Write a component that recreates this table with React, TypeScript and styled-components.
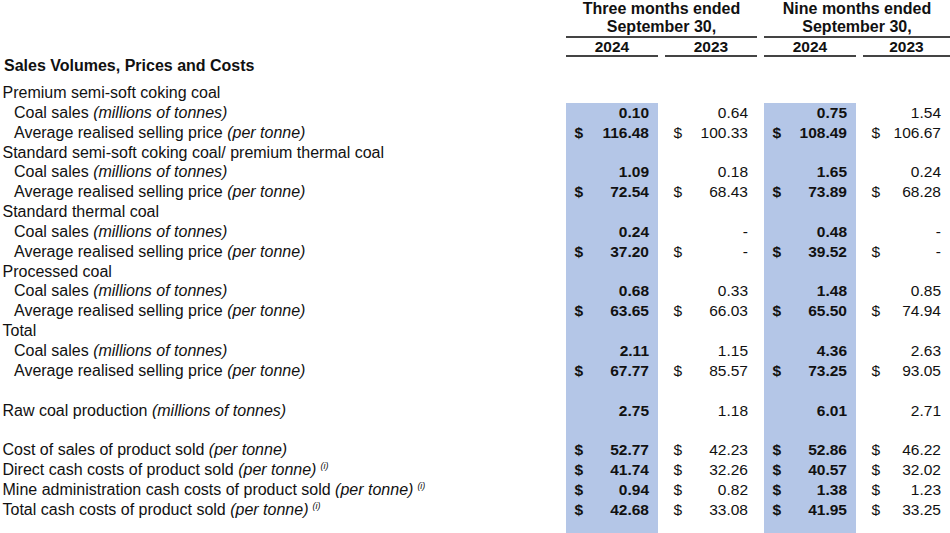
import React from "react";
import styled, { createGlobalStyle } from "styled-components";

const GlobalStyle = createGlobalStyle`
  html, body { margin: 0; padding: 0; background: #ffffff; }
  body {
    font-family: "Liberation Sans", Arial, sans-serif;
    font-size: 15.5px;
    color: #111111;
  }
`;

const Page = styled.div`
  width: 950px;
  min-height: 100vh;
  display: flex;
  flex-direction: column;
  overflow: hidden;
`;

const Grid = styled.div`
  display: grid;
  grid-template-columns: 559px 92px 92px 92px 1fr;
  column-gap: 7px;
`;

const GroupRow = styled(Grid)`
  font-weight: bold;
  font-size: 16px;
  line-height: 18px;
`;

const GroupTitle = styled.div<{ $span: string }>`
  grid-column: ${(p) => p.$span};
  text-align: center;
  border-bottom: 2px solid #444444;
`;

const YearRow = styled(Grid)`
  font-weight: bold;
  line-height: 17px;
`;

const Year = styled.div`
  text-align: center;
  border-bottom: 2px solid #444444;
`;

const Heading = styled.div`
  font-weight: bold;
  font-size: 16px;
  line-height: 18px;
  padding-left: 4px;
  margin-bottom: 8px;
`;

const DataRow = styled(Grid)`
  line-height: 19.85px;
  white-space: nowrap;
`;

const Filler = styled(Grid)`
  flex: 1;
`;

const Label = styled.div<{ $indent: boolean }>`
  padding-left: ${(p) => (p.$indent ? "14px" : "2.5px")};
  font-size: 16px;
`;

const Unit = styled.span`
  font-style: italic;
`;

const Note = styled.sup`
  font-size: 9px;
  font-style: italic;
  line-height: 0;
  vertical-align: 6px;
  margin-left: 4px;
`;

const Value = styled.div<{ $strong: boolean; $shade: boolean }>`
  display: flex;
  justify-content: space-between;
  padding: 0 9px 0 8.5px;
  font-weight: ${(p) => (p.$strong ? "bold" : "normal")};
  background: ${(p) => (p.$shade ? "#b4c6e7" : "transparent")};
`;

type Row =
  | { kind: "section"; label: string }
  | { kind: "blank" }
  | {
      kind: "item";
      label: string;
      unit: string;
      indent: boolean;
      dollar?: boolean;
      note?: boolean;
      values: string[];
    };

const rows: Row[] = [
  { kind: "section", label: "Premium semi-soft coking coal" },
  { kind: "item", label: "Coal sales", unit: "(millions of tonnes)", indent: true, values: ["0.10", "0.64", "0.75", "1.54"] },
  { kind: "item", label: "Average realised selling price", unit: "(per tonne)", indent: true, dollar: true, values: ["116.48", "100.33", "108.49", "106.67"] },
  { kind: "section", label: "Standard semi-soft coking coal/ premium thermal coal" },
  { kind: "item", label: "Coal sales", unit: "(millions of tonnes)", indent: true, values: ["1.09", "0.18", "1.65", "0.24"] },
  { kind: "item", label: "Average realised selling price", unit: "(per tonne)", indent: true, dollar: true, values: ["72.54", "68.43", "73.89", "68.28"] },
  { kind: "section", label: "Standard thermal coal" },
  { kind: "item", label: "Coal sales", unit: "(millions of tonnes)", indent: true, values: ["0.24", "-", "0.48", "-"] },
  { kind: "item", label: "Average realised selling price", unit: "(per tonne)", indent: true, dollar: true, values: ["37.20", "-", "39.52", "-"] },
  { kind: "section", label: "Processed coal" },
  { kind: "item", label: "Coal sales", unit: "(millions of tonnes)", indent: true, values: ["0.68", "0.33", "1.48", "0.85"] },
  { kind: "item", label: "Average realised selling price", unit: "(per tonne)", indent: true, dollar: true, values: ["63.65", "66.03", "65.50", "74.94"] },
  { kind: "section", label: "Total" },
  { kind: "item", label: "Coal sales", unit: "(millions of tonnes)", indent: true, values: ["2.11", "1.15", "4.36", "2.63"] },
  { kind: "item", label: "Average realised selling price", unit: "(per tonne)", indent: true, dollar: true, values: ["67.77", "85.57", "73.25", "93.05"] },
  { kind: "blank" },
  { kind: "item", label: "Raw coal production", unit: "(millions of tonnes)", indent: false, values: ["2.75", "1.18", "6.01", "2.71"] },
  { kind: "blank" },
  { kind: "item", label: "Cost of sales of product sold", unit: "(per tonne)", indent: false, dollar: true, values: ["52.77", "42.23", "52.86", "46.22"] },
  { kind: "item", label: "Direct cash costs of product sold", unit: "(per tonne)", indent: false, dollar: true, note: true, values: ["41.74", "32.26", "40.57", "32.02"] },
  { kind: "item", label: "Mine administration cash costs of product sold", unit: "(per tonne)", indent: false, dollar: true, note: true, values: ["0.94", "0.82", "1.38", "1.23"] },
  { kind: "item", label: "Total cash costs of product sold", unit: "(per tonne)", indent: false, dollar: true, note: true, values: ["42.68", "33.08", "41.95", "33.25"] },
];

const strongCol = [true, false, true, false];

export default function App() {
  return (
    <Page>
      <GlobalStyle />
      <GroupRow>
        <GroupTitle $span="2 / 4">
          Three months ended
          <br />
          September 30,
        </GroupTitle>
        <GroupTitle $span="4 / 6">
          Nine months ended
          <br />
          September 30,
        </GroupTitle>
      </GroupRow>
      <YearRow>
        <div />
        <Year>2024</Year>
        <Year>2023</Year>
        <Year>2024</Year>
        <Year>2023</Year>
      </YearRow>
      <Heading>Sales Volumes, Prices and Costs</Heading>
      {rows.map((row, i) => {
        const shade = i > 0;
        if (row.kind === "blank" || row.kind === "section") {
          return (
            <DataRow key={i}>
              <Label $indent={false}>{row.kind === "section" ? row.label : "\u00a0"}</Label>
              {strongCol.map((s, c) => (
                <Value key={c} $strong={s} $shade={shade && s} />
              ))}
            </DataRow>
          );
        }
        return (
          <DataRow key={i}>
            <Label $indent={row.indent}>
              {row.label} <Unit>{row.unit}</Unit>
              {row.note && <Note>(i)</Note>}
            </Label>
            {row.values.map((v, c) => (
              <Value key={c} $strong={strongCol[c]} $shade={shade && strongCol[c]}>
                <span>{row.dollar ? "$" : ""}</span>
                <span>{v}</span>
              </Value>
            ))}
          </DataRow>
        );
      })}
      <Filler>
        <div />
        {strongCol.map((s, c) => (
          <Value key={c} $strong={s} $shade={s} />
        ))}
      </Filler>
    </Page>
  );
}
